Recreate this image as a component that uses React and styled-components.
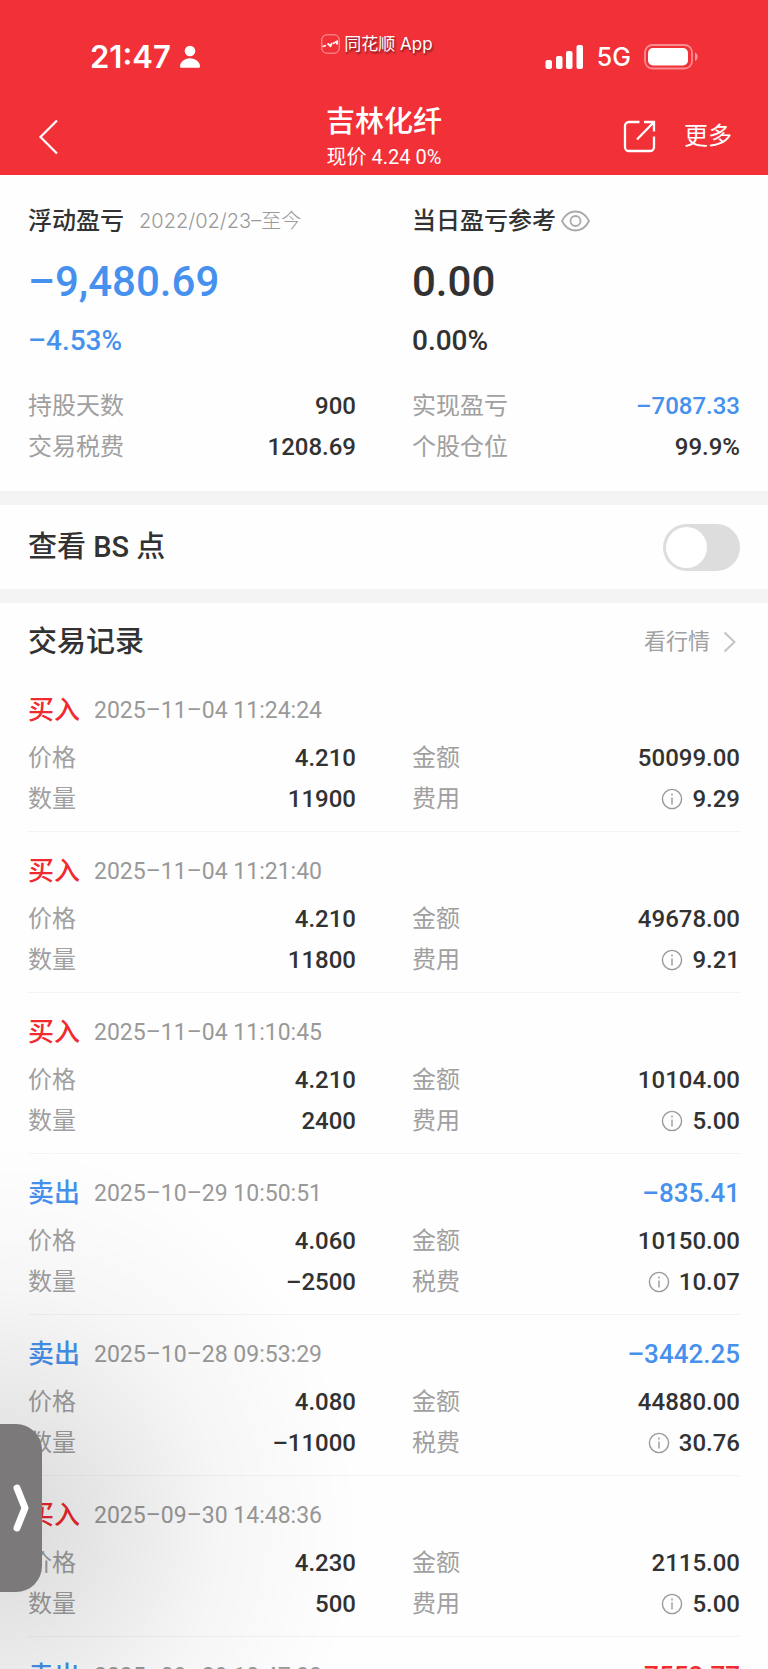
import styled, { createGlobalStyle } from 'styled-components';

const GlobalStyle = createGlobalStyle`
    * {
        box-sizing: border-box;
    }
    body {
        margin: 0;
        background: #fff;
        color: #323232;
        font-family: Roboto, 'Noto Sans CJK SC', sans-serif;
        line-height: 1.2;
    }
    button {
        padding: 0;
        border: 0;
        background: none;
        color: inherit;
        font: inherit;
        cursor: pointer;
    }
    h1, h2, p, dl, dd, ul {
        margin: 0;
        padding: 0;
        font-weight: inherit;
    }
    svg {
        display: block;
    }
`;

const tones = {
    plain: '#323232',
    up: '#f02a2e',
    down: '#4691ee',
};

const Shell = styled.div`
    display: flex;
    flex-direction: column;
    height: 100vh;
    overflow: hidden;
    background: #fefefe;
`;

const Header = styled.header`
    flex: none;
    background: #f23038;
    color: #fff;
`;

const StatusBar = styled.div`
    display: grid;
    grid-template-columns: 1fr auto 1fr;
    padding: 32px 70px 0 56px;
    height: 96px;
`;

const Clock = styled.div`
    display: flex;
    align-items: center;
    gap: 8px;
    height: 50px;
    padding-left: 34px;
    font-family: Inter, sans-serif;
    font-size: 31px;
    font-weight: 600;
`;

const AppBadge = styled.div`
    display: flex;
    align-items: center;
    gap: 4px;
    height: 24px;
    font-family: Inter, 'Noto Sans CJK SC', sans-serif;
    font-size: 17px;
    text-shadow: 1px 2px 2px rgba(0, 0, 0, 0.5);
`;

const Signals = styled.div`
    display: flex;
    align-items: center;
    justify-content: flex-end;
    gap: 13px;
    height: 50px;
    font-family: Inter, sans-serif;
    font-size: 25px;
    font-weight: 500;
`;

const NavBar = styled.nav`
    display: grid;
    grid-template-columns: 1fr auto 1fr;
    align-items: center;
    height: 79px;
    padding: 2px 36px 0;
`;

const NavTitle = styled.div`
    padding-top: 2px;
    text-align: center;
`;

const StockName = styled.h1`
    font-size: 29px;
    font-weight: 500;
    line-height: 38px;
`;

const StockPrice = styled.p`
    font-size: 20px;
    line-height: 32px;
`;

const NavActions = styled.div`
    display: flex;
    align-items: center;
    justify-content: flex-end;
    gap: 28px;
    font-size: 24px;
`;

const Content = styled.main`
    flex: 1;
    min-height: 0;
    overflow-y: auto;
    scrollbar-width: none;
`;

const Section = styled.section`
    padding: 0 28px;
    border-bottom: ${({ $last }) => ($last ? '0' : '14px solid #f4f4f4')};
`;

const Columns = styled.div`
    display: grid;
    grid-template-columns: 1fr 1fr;
    column-gap: 56px;
`;

const Summary = styled(Columns)`
    padding: 25px 0 23px;
`;

const SummaryTitle = styled.h2`
    display: flex;
    align-items: center;
    gap: 3px;
    height: 42px;
    font-size: 24px;
    font-weight: 500;
`;

const Period = styled.span`
    margin-left: 12px;
    color: #999;
    font-family: Inter, 'Noto Sans CJK SC', sans-serif;
    font-size: 20px;
    font-weight: 300;
`;

const BigNumber = styled.p`
    color: ${({ $tone }) => tones[$tone]};
    font-size: 42px;
    font-weight: 500;
    line-height: 80px;
`;

const Percent = styled.p`
    margin-bottom: 26px;
    color: ${({ $tone }) => tones[$tone]};
    font-size: 28px;
    font-weight: 500;
    line-height: 38px;
`;

const Line = styled.div`
    display: flex;
    align-items: center;
    justify-content: space-between;
    height: 41px;
`;

const Label = styled.dt`
    color: #a0a0a0;
    font-size: 24px;
    font-weight: 400;
`;

const Value = styled.dd`
    display: flex;
    align-items: center;
    gap: 9px;
    color: ${({ $tone }) => tones[$tone || 'plain']};
    font-size: 24px;
    font-weight: 500;
`;

const SwitchRow = styled.label`
    display: flex;
    align-items: center;
    justify-content: space-between;
    height: 84px;
    font-size: 29px;
    font-weight: 500;
`;

const Switch = styled.input`
    appearance: none;
    width: 77px;
    height: 47px;
    margin: 0;
    padding: 3px;
    border-radius: 24px;
    background: #ddd;
    cursor: pointer;

    &::before {
        content: '';
        display: block;
        width: 41px;
        height: 41px;
        border-radius: 50%;
        background: #fff;
    }
    &:checked {
        background: #f23038;
    }
    &:checked::before {
        margin-left: auto;
    }
`;

const ListHeader = styled.div`
    display: flex;
    align-items: center;
    justify-content: space-between;
    height: 68px;
    padding-top: 11px;
`;

const ListTitle = styled.h2`
    font-size: 29px;
    font-weight: 500;
`;

const QuoteLink = styled.a`
    display: flex;
    align-items: center;
    gap: 13px;
    padding-right: 3px;
    color: #a0a0a0;
    font-size: 22px;
    text-decoration: none;
`;

const RecordList = styled.ul`
    list-style: none;
`;

const RecordItem = styled.li`
    height: 161px;
    padding-top: 20px;
    border-bottom: 1px solid #f4f4f4;
`;

const RecordHead = styled.div`
    display: flex;
    align-items: center;
    height: 40px;
    margin-bottom: 7px;
`;

const Side = styled.span`
    color: ${({ $tone }) => tones[$tone]};
    font-size: 26px;
    font-weight: 500;
`;

const Time = styled.time`
    margin-left: 14px;
    color: #999;
    font-size: 23px;
    font-weight: 400;
`;

const Profit = styled.span`
    margin-left: auto;
    color: ${({ $tone }) => tones[$tone]};
    font-size: 26px;
    font-weight: 500;
`;

/* drawer handle that floats over the list */
const Drawer = styled.div`
    position: fixed;
    left: 0;
    bottom: 77px;
    width: 42px;
    height: 168px;

    &::before {
        content: '';
        position: absolute;
        left: -360px;
        top: -280px;
        width: 720px;
        height: 760px;
        background: radial-gradient(closest-side, rgba(0, 0, 0, 0.14), rgba(0, 0, 0, 0.09) 30%, rgba(0, 0, 0, 0.03) 62%, transparent);
        pointer-events: none;
    }
`;

const DrawerButton = styled.button`
    position: relative;
    display: flex;
    align-items: center;
    justify-content: center;
    width: 42px;
    height: 168px;
    padding-left: 1px;
    border-radius: 0 26px 26px 0;
    background: #7b7979;
`;

const records = [
    { side: '买入', time: '2025–11–04 11:24:24', price: '4.210', count: '11900', amount: '50099.00', fee: '9.29' },
    { side: '买入', time: '2025–11–04 11:21:40', price: '4.210', count: '11800', amount: '49678.00', fee: '9.21' },
    { side: '买入', time: '2025–11–04 11:10:45', price: '4.210', count: '2400', amount: '10104.00', fee: '5.00' },
    { side: '卖出', time: '2025–10–29 10:50:51', price: '4.060', count: '–2500', amount: '10150.00', fee: '10.07', profit: '–835.41' },
    { side: '卖出', time: '2025–10–28 09:53:29', price: '4.080', count: '–11000', amount: '44880.00', fee: '30.76', profit: '–3442.25' },
    { side: '买入', time: '2025–09–30 14:48:36', price: '4.230', count: '500', amount: '2115.00', fee: '5.00' },
    { side: '卖出', time: '2025–09–29 10:47:38', price: '4.310', count: '–25000', amount: '107750.00', fee: '69.12', profit: '7553.77' },
];

const InfoIcon = () => (
    <svg width="22" height="22" viewBox="0 0 22 22" fill="none" stroke="#999" strokeWidth="1.4">
        <circle cx="11" cy="11" r="9.6" />
        <path d="M11 9.4v7M11 5.6v1.8" />
    </svg>
);

const Row = ({ label, value, tone, info }) => (
    <Line>
        <Label>{label}</Label>
        <Value $tone={tone}>
            {info && <InfoIcon />}
            {value}
        </Value>
    </Line>
);

const Record = ({ item }) => {
    const sold = item.side === '卖出';
    return (
        <RecordItem>
            <RecordHead>
                <Side $tone={sold ? 'down' : 'up'}>{item.side}</Side>
                <Time>{item.time}</Time>
                {item.profit && (
                    <Profit $tone={item.profit.startsWith('–') ? 'down' : 'up'}>{item.profit}</Profit>
                )}
            </RecordHead>
            <Columns>
                <dl>
                    <Row label="价格" value={item.price} />
                    <Row label="数量" value={item.count} />
                </dl>
                <dl>
                    <Row label="金额" value={item.amount} />
                    <Row label={sold ? '税费' : '费用'} value={item.fee} info />
                </dl>
            </Columns>
        </RecordItem>
    );
};

export default function App() {
    return (
        <Shell>
            <GlobalStyle />
            <Header>
                <StatusBar>
                    <Clock>
                        21:47
                        <svg width="22" height="24" viewBox="0 0 22 24" fill="#fff">
                            <circle cx="11" cy="6" r="5.3" />
                            <path d="M1 21.5C1 17 5.5 13.3 11 13.3s10 3.7 10 8.2c0 1-.6 1.3-1.5 1.3h-17C1.600 22.800 1 22.500 1 21.500z" />
                        </svg>
                    </Clock>
                    <AppBadge>
                        <svg width="19" height="20" viewBox="0 0 19 20" fill="none">
                            <rect x="0.8" y="0.8" width="17.4" height="18.4" rx="5" stroke="#fff" strokeOpacity="0.55" />
                            <path d="M1.5 12.5l3.5-1M6.5 9.5l3 2.500 1.500-3M12 9.500l4-2v3" stroke="#fff" strokeWidth="1.8" />
                        </svg>
                        同花顺 App
                    </AppBadge>
                    <Signals>
                        <svg width="39" height="24" viewBox="0 0 39 24" fill="#fff">
                            <rect x="0.5" y="15" width="6.5" height="9" rx="2" />
                            <rect x="11" y="11" width="6.5" height="13" rx="2" />
                            <rect x="21" y="6" width="6.5" height="18" rx="2" />
                            <rect x="31.5" y="0" width="6.5" height="24" rx="2" />
                        </svg>
                        5G
                        <svg width="54" height="26" viewBox="0 0 54 26" fill="none">
                            <rect x="1" y="1" width="47" height="23.5" rx="7.5" stroke="#fff" strokeOpacity="0.45" strokeWidth="1.8" />
                            <rect x="4" y="4" width="40" height="17.5" rx="5" fill="#fff" />
                            <path d="M51 8.5c3.5 1.5 3.5 7 0 8.5z" fill="#fff" fillOpacity="0.5" />
                        </svg>
                    </Signals>
                </StatusBar>
                <NavBar>
                    <button type="button" aria-label="返回">
                        <svg width="24" height="36" viewBox="0 0 24 36" fill="none" stroke="#fff" strokeWidth="2.2">
                            <path d="M21 1.5L4.5 18 21 34.5" />
                        </svg>
                    </button>
                    <NavTitle>
                        <StockName>吉林化纤</StockName>
                        <StockPrice>现价 4.24 0%</StockPrice>
                    </NavTitle>
                    <NavActions>
                        <button type="button" aria-label="分享">
                            <svg width="33" height="33" viewBox="0 0 33 33" fill="none" stroke="#fff" strokeWidth="2.3">
                                <path d="M16.5 2H6a4 4 0 0 0-4 4v21a4 4 0 0 0 4 4h21a4 4 0 0 0 4-4V16.500" />
                                <path d="M21 2h10v9.5M31 2L14 19.5" />
                            </svg>
                        </button>
                        <button type="button">更多</button>
                    </NavActions>
                </NavBar>
            </Header>

            <Content>
                <Section>
                    <Summary>
                        <div>
                            <SummaryTitle>
                                浮动盈亏
                                <Period>2022/02/23–至今</Period>
                            </SummaryTitle>
                            <BigNumber $tone="down">–9,480.69</BigNumber>
                            <Percent $tone="down">–4.53%</Percent>
                            <dl>
                                <Row label="持股天数" value="900" />
                                <Row label="交易税费" value="1208.69" />
                            </dl>
                        </div>
                        <div>
                            <SummaryTitle>
                                当日盈亏参考
                                <svg width="32" height="22" viewBox="0 0 32 22" fill="none" stroke="#aaa" strokeWidth="1.8">
                                    <path d="M3 11C6 5 11 1.5 16.5 1.5S27 5 30 11c-3 6-8 9.500-13.500 9.500S6 17 3 11z" />
                                    <circle cx="16.5" cy="11" r="5" />
                                </svg>
                            </SummaryTitle>
                            <BigNumber $tone="plain">0.00</BigNumber>
                            <Percent $tone="plain">0.00%</Percent>
                            <dl>
                                <Row label="实现盈亏" value="–7087.33" tone="down" />
                                <Row label="个股仓位" value="99.9%" />
                            </dl>
                        </div>
                    </Summary>
                </Section>

                <Section>
                    <SwitchRow>
                        查看 BS 点
                        <Switch type="checkbox" role="switch" />
                    </SwitchRow>
                </Section>

                <Section $last>
                    <ListHeader>
                        <ListTitle>交易记录</ListTitle>
                        <QuoteLink href="#quote">
                            看行情
                            <svg width="14" height="22" viewBox="0 0 14 22" fill="none" stroke="#c4c4c4" strokeWidth="2">
                                <path d="M1.5 1.5L11.5 11l-10 9.5" />
                            </svg>
                        </QuoteLink>
                    </ListHeader>
                    <RecordList>
                        {records.map((item) => (
                            <Record key={item.time} item={item} />
                        ))}
                    </RecordList>
                </Section>
            </Content>

            <Drawer>
                <DrawerButton type="button" aria-label="展开">
                    <svg width="18" height="48" viewBox="0 0 18 48" fill="none" stroke="#fff" strokeWidth="7" strokeLinecap="round" strokeLinejoin="round">
                        <path d="M4 4l8 20-8 20" />
                    </svg>
                </DrawerButton>
            </Drawer>
        </Shell>
    );
}
